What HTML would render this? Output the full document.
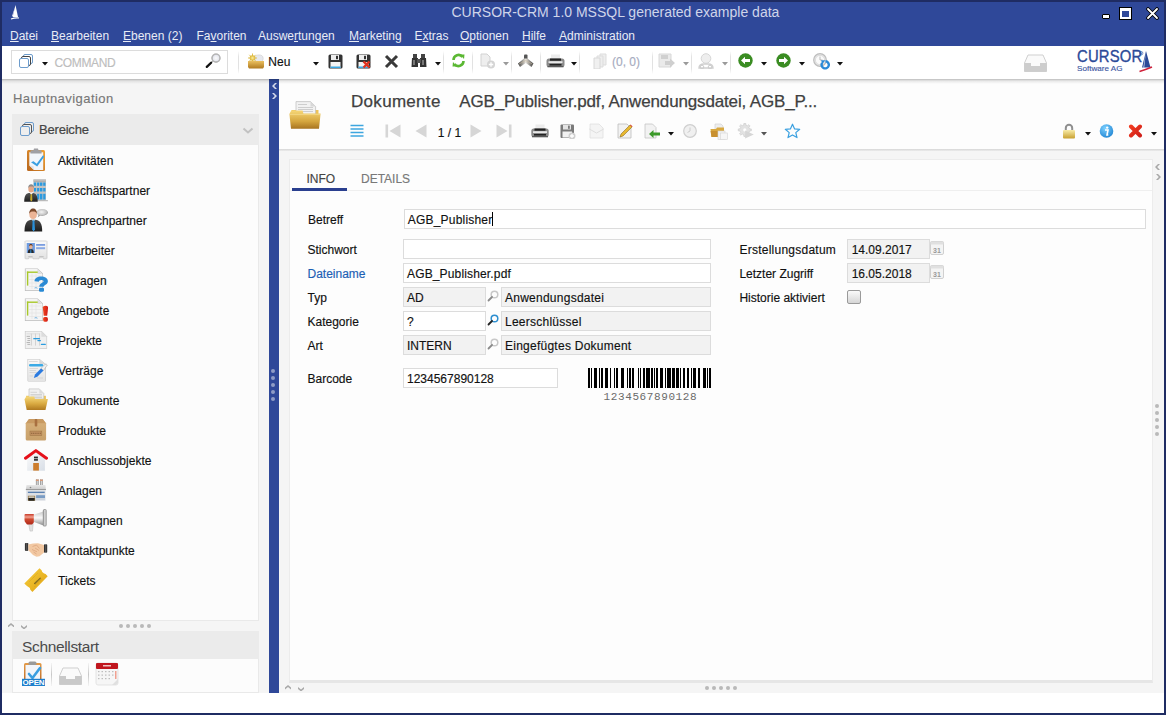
<!DOCTYPE html><html><head><meta charset="utf-8"><style>
*{box-sizing:border-box;margin:0;padding:0}
html,body{width:1166px;height:715px;overflow:hidden;background:#1f2c63;font-family:"Liberation Sans",sans-serif;font-size:12px;color:#111}
.a{position:absolute}
.t{white-space:nowrap;-webkit-text-stroke:0.15px currentColor}
</style></head><body>
<div class="a" style="left:2px;top:2px;width:1162px;height:44px;background:#2f4899"></div>
<svg class="a" style="left:9px;top:4px" width="12" height="18" viewBox="0 0 12 18"><path d="M6.5 1 L9 13 L3.5 13 Z" fill="#fff"/><path d="M6 3 L4 12 L3 12Z" fill="#dde"/><path d="M2 15 Q6 13.5 10 14" stroke="#fff" stroke-width="1.2" fill="none"/></svg>
<div class="a t" style="left:451.5px;top:4.85px;font-size:14px;line-height:14px;color:#cfd5ea;-webkit-text-stroke:0">CURSOR-CRM 1.0 MSSQL generated example data</div>
<div class="a" style="left:1101.5px;top:14px;width:8px;height:5px;background:#fff;border:1px solid #000;border-radius:1px"></div>
<div class="a" style="left:1119px;top:7px;width:13px;height:13px;border:1px solid #000;background:#000"></div>
<div class="a" style="left:1120px;top:8px;width:11px;height:11px;border:2px solid #fff;border-top-width:3px;background:#2f4899"></div>
<svg class="a" style="left:1146px;top:7px" width="13" height="13" viewBox="0 0 13 13"><path d="M2 2L11 11M11 2L2 11" stroke="#000" stroke-width="3.6" stroke-linecap="round"/><path d="M2 2L11 11M11 2L2 11" stroke="#fff" stroke-width="1.8" stroke-linecap="round"/></svg>
<div class="a t" style="left:10px;top:30.04px;font-size:12px;line-height:12px;color:#e9ecf6;-webkit-text-stroke:0"><u>D</u>atei</div>
<div class="a t" style="left:51px;top:30.04px;font-size:12px;line-height:12px;color:#e9ecf6;-webkit-text-stroke:0"><u>B</u>earbeiten</div>
<div class="a t" style="left:123px;top:30.04px;font-size:12px;line-height:12px;color:#e9ecf6;-webkit-text-stroke:0"><u>E</u>benen (2)</div>
<div class="a t" style="left:196.5px;top:30.04px;font-size:12px;line-height:12px;color:#e9ecf6;-webkit-text-stroke:0">Fa<u>v</u>oriten</div>
<div class="a t" style="left:258px;top:30.04px;font-size:12px;line-height:12px;color:#e9ecf6;-webkit-text-stroke:0">Auswe<u>r</u>tungen</div>
<div class="a t" style="left:349px;top:30.04px;font-size:12px;line-height:12px;color:#e9ecf6;-webkit-text-stroke:0"><u>M</u>arketing</div>
<div class="a t" style="left:414.5px;top:30.04px;font-size:12px;line-height:12px;color:#e9ecf6;-webkit-text-stroke:0">E<u>x</u>tras</div>
<div class="a t" style="left:460px;top:30.04px;font-size:12px;line-height:12px;color:#e9ecf6;-webkit-text-stroke:0"><u>O</u>ptionen</div>
<div class="a t" style="left:522px;top:30.04px;font-size:12px;line-height:12px;color:#e9ecf6;-webkit-text-stroke:0"><u>H</u>ilfe</div>
<div class="a t" style="left:559px;top:30.04px;font-size:12px;line-height:12px;color:#e9ecf6;-webkit-text-stroke:0"><u>A</u>dministration</div>
<div class="a" style="left:2px;top:46px;width:1162px;height:33px;background:#fff"></div>
<div class="a" style="left:2px;top:79px;width:267px;height:614px;background:#f5f5f5"></div>
<div class="a" style="left:269px;top:79px;width:10px;height:614px;background:#2f4899"></div>
<div class="a" style="left:279px;top:79px;width:885px;height:614px;background:#f5f5f5"></div>
<div class="a" style="left:279px;top:79px;width:885px;height:70px;background:#fdfdfd"></div>
<div class="a" style="left:279px;top:149px;width:885px;height:2px;background:linear-gradient(#d6d6d6,#ececec)"></div>
<div class="a" style="left:2px;top:693px;width:1162px;height:20px;background:#fff"></div>
<div class="a" style="left:11px;top:50px;width:217px;height:24px;border:1px solid #dcdcdc;background:#fff"></div>
<svg class="a" style="left:18px;top:53px" width="16" height="16" viewBox="0 0 16 16"><rect x="5.5" y="1.5" width="9" height="9" rx="1.5" fill="#fff" stroke="#6d9ccc"/><rect x="3.5" y="3.5" width="9" height="9" rx="1.5" fill="#fff" stroke="#444"/><rect x="1.5" y="5.5" width="9" height="9" rx="1.5" fill="#fff" stroke="#6d9ccc"/></svg>
<svg class="a" style="left:42px;top:61.5px" width="6" height="4" viewBox="0 0 6 4"><path d="M0 0H6L3 3.5Z" fill="#111"/></svg>
<div class="a t" style="left:54.5px;top:56.84px;font-size:12px;line-height:12px;color:#bdbdbd;letter-spacing:-0.35px">COMMAND</div>
<svg class="a" style="left:204px;top:53px" width="18" height="16" viewBox="0 0 18 16"><defs><radialGradient id="mgg" cx=".5" cy=".5" r=".5"><stop offset="0" stop-color="#fafafa"/><stop offset=".7" stop-color="#e4e6ee"/><stop offset="1" stop-color="#b8b8b8"/></radialGradient></defs><path d="M7 9.8L9.2 7.8" stroke="#b0b0b0" stroke-width="1.2"/><path d="M2.8 13.9L7.1 9.7" stroke="#111" stroke-width="2.3" stroke-linecap="round"/><circle cx="12" cy="5.1" r="4.6" fill="url(#mgg)"/><circle cx="12" cy="5.1" r="3.9" fill="none" stroke="#b4b4b4" stroke-width="1.3"/></svg>
<div class="a" style="left:238px;top:51px;width:1px;height:23px;background:linear-gradient(#fff,#e2e2e2 25%,#e2e2e2 75%,#fff)"></div>
<div class="a" style="left:443px;top:51px;width:1px;height:23px;background:linear-gradient(#fff,#e2e2e2 25%,#e2e2e2 75%,#fff)"></div>
<div class="a" style="left:472px;top:51px;width:1px;height:23px;background:linear-gradient(#fff,#e2e2e2 25%,#e2e2e2 75%,#fff)"></div>
<div class="a" style="left:511px;top:51px;width:1px;height:23px;background:linear-gradient(#fff,#e2e2e2 25%,#e2e2e2 75%,#fff)"></div>
<div class="a" style="left:540px;top:51px;width:1px;height:23px;background:linear-gradient(#fff,#e2e2e2 25%,#e2e2e2 75%,#fff)"></div>
<div class="a" style="left:579px;top:51px;width:1px;height:23px;background:linear-gradient(#fff,#e2e2e2 25%,#e2e2e2 75%,#fff)"></div>
<div class="a" style="left:652px;top:51px;width:1px;height:23px;background:linear-gradient(#fff,#e2e2e2 25%,#e2e2e2 75%,#fff)"></div>
<div class="a" style="left:691px;top:51px;width:1px;height:23px;background:linear-gradient(#fff,#e2e2e2 25%,#e2e2e2 75%,#fff)"></div>
<div class="a" style="left:730px;top:51px;width:1px;height:23px;background:linear-gradient(#fff,#e2e2e2 25%,#e2e2e2 75%,#fff)"></div>
<svg class="a" style="left:247px;top:53px" width="18" height="16" viewBox="0 0 18 16"><defs><linearGradient id="gf" x1="0" y1="0" x2="0" y2="1"><stop offset="0" stop-color="#eac060"/><stop offset="1" stop-color="#b07a20"/></linearGradient><radialGradient id="sun" cx=".5" cy=".5" r=".5"><stop offset="0" stop-color="#fff0a0"/><stop offset="1" stop-color="#d8b030"/></radialGradient></defs><ellipse cx="12" cy="5.5" rx="4.2" ry="3.6" fill="#e6e8ee" stroke="#c4c4c4" stroke-width=".5"/><path d="M5.5 0.5V9.5M1 5H10M2.3 1.8L8.7 8.2M8.7 1.8L2.3 8.2" stroke="#e0c050" stroke-width="1"/><circle cx="5.5" cy="5" r="2.8" fill="url(#sun)"/><path d="M1 8H17V14L16 15.5H2L1 14Z" fill="url(#gf)"/></svg>
<div class="a t" style="left:268.3px;top:56.04px;font-size:12px;line-height:12px;color:#111;">Neu</div>
<svg class="a" style="left:313px;top:62px" width="6" height="4" viewBox="0 0 6 4"><path d="M0 0H6L3 3.5Z" fill="#111"/></svg>
<svg class="a" style="left:327.5px;top:53.5px" width="15" height="15" viewBox="0 0 15 15"><rect x=".5" y=".5" width="14" height="14" rx="1.5" fill="#333"/><rect x="3" y="1" width="8" height="5" fill="#eee"/><rect x="8" y="1.8" width="2" height="3.4" fill="#333"/><rect x="2.5" y="8" width="10" height="6" fill="#f4f4f4"/><rect x="2.5" y="12.5" width="10" height="1.5" fill="#3aa7e2"/></svg>
<svg class="a" style="left:355.5px;top:53.5px" width="15" height="15" viewBox="0 0 15 15"><rect x=".5" y=".5" width="14" height="14" rx="1.5" fill="#333"/><rect x="3" y="1" width="8" height="5" fill="#eee"/><rect x="8" y="1.8" width="2" height="3.4" fill="#333"/><rect x="2.5" y="8" width="10" height="6" fill="#f4f4f4"/><rect x="2.5" y="12.5" width="10" height="1.5" fill="#3aa7e2"/></svg>
<svg class="a" style="left:362px;top:60px" width="9" height="9" viewBox="0 0 9 9"><path d="M1.5 1.5L7.5 7.5M7.5 1.5L1.5 7.5" stroke="#e0321e" stroke-width="2.4"/></svg>
<svg class="a" style="left:383.5px;top:53.5px" width="15" height="15" viewBox="0 0 15 15"><path d="M2 2L13 13M13 2L2 13" stroke="#3a3a3a" stroke-width="3"/></svg>
<svg class="a" style="left:411px;top:53px" width="16" height="15" viewBox="0 0 16 15"><rect x="2" y="1" width="4" height="4" fill="#444"/><rect x="10" y="1" width="4" height="4" fill="#444"/><path d="M1 5H7V14H0.5Z" fill="#333"/><path d="M9 5H15L15.5 14H9Z" fill="#333"/><rect x="6" y="6" width="4" height="4" fill="#555"/><rect x="2" y="7" width="2" height="5" fill="#777"/><rect x="11" y="7" width="2" height="5" fill="#777"/></svg>
<svg class="a" style="left:435px;top:62px" width="6" height="4" viewBox="0 0 6 4"><path d="M0 0H6L3 3.5Z" fill="#111"/></svg>
<svg class="a" style="left:450.5px;top:53px" width="15" height="15" viewBox="0 0 15 15"><path d="M2.5 7A5 5 0 0 1 11.5 4" stroke="#5bb833" stroke-width="2.6" fill="none"/><path d="M9 1.5L13.5 1.5L13 6Z" fill="#5bb833"/><path d="M12.5 8A5 5 0 0 1 3.5 11" stroke="#5bb833" stroke-width="2.6" fill="none"/><path d="M6 13.5L1.5 13.5L2 9Z" fill="#5bb833"/></svg>
<svg class="a" style="left:479px;top:53px" width="17" height="16" viewBox="0 0 17 16"><path d="M2 1H8L11 4V13H2Z" fill="#eee" stroke="#d2d2d2"/><circle cx="12" cy="11.5" r="4" fill="#d4d4d4"/><path d="M12 9.3V13.7M9.8 11.5H14.2" stroke="#fff" stroke-width="1.3"/></svg>
<svg class="a" style="left:502.5px;top:62px" width="6" height="4" viewBox="0 0 6 4"><path d="M0 0H6L3 3.5Z" fill="#9a9a9a"/></svg>
<svg class="a" style="left:518px;top:54px" width="16" height="14" viewBox="0 0 16 14"><defs><linearGradient id="mgl" x1="0" y1="0" x2="1" y2="0"><stop offset="0" stop-color="#3a3a3a"/><stop offset=".5" stop-color="#e8e4dc"/><stop offset="1" stop-color="#3a3a3a"/></linearGradient></defs><rect x="6" y="0.5" width="3.5" height="5" rx="1" fill="#555"/><path d="M6 4.5H9.5L15.5 9.5L13.5 13L7.75 9L2 13L0 9.5Z" fill="url(#mgl)"/><path d="M1 10L7.75 6.5L14.5 10" stroke="#c8b8a0" stroke-width=".6" fill="none"/></svg>
<svg class="a" style="left:546px;top:53px" width="19" height="15" viewBox="0 0 19 15"><rect x="5" y="1.5" width="9" height="5" fill="#ececec"/><rect x="0.5" y="5.5" width="18" height="8.5" rx="2.5" fill="#8a8a8a"/><rect x="4" y="5.5" width="11" height="2.2" fill="#222"/><rect x="2.5" y="8.3" width="14" height="1.6" fill="#f2f2f2"/><rect x="3.5" y="11" width="12" height="1.6" fill="#222"/><rect x="1.5" y="13" width="16" height="1.3" fill="#5a5a5a"/></svg>
<svg class="a" style="left:570.5px;top:62px" width="6" height="4" viewBox="0 0 6 4"><path d="M0 0H6L3 3.5Z" fill="#111"/></svg>
<svg class="a" style="left:593px;top:53px" width="15" height="16" viewBox="0 0 15 16"><path d="M7 1H13V12H7Z" fill="#eee" stroke="#ddd"/><path d="M4 3H10V14H4Z" fill="#eee" stroke="#ddd"/><path d="M1 5H7V16H1Z" fill="#f0f0f0" stroke="#d8d8d8"/></svg>
<div class="a t" style="left:612px;top:56.44px;font-size:12px;line-height:12px;color:#a6abc0;">(0, 0)</div>
<svg class="a" style="left:658px;top:53px" width="18" height="16" viewBox="0 0 18 16"><path d="M1 1H13V14H1Z" fill="#eaeaea" stroke="#d8d8d8"/><rect x="3" y="2" width="7" height="4" fill="#d0d0d0"/><path d="M7 8H12V5.5L17 10L12 14.5V12H7Z" fill="#cfcfcf"/></svg>
<svg class="a" style="left:683px;top:62px" width="6" height="4" viewBox="0 0 6 4"><path d="M0 0H6L3 3.5Z" fill="#9a9a9a"/></svg>
<svg class="a" style="left:698px;top:53px" width="16" height="16" viewBox="0 0 16 16"><circle cx="8" cy="5.5" r="4.8" fill="#eee" stroke="#d6d6d6"/><path d="M1 15C1 12 3 11 6 11H10C13 11 15 12 15 15Z" fill="none" stroke="#d0d0d0" stroke-width="1.4"/><circle cx="4" cy="14" r="1.8" fill="none" stroke="#ccc"/><circle cx="12" cy="14" r="1.8" fill="none" stroke="#ccc"/></svg>
<svg class="a" style="left:722px;top:62px" width="6" height="4" viewBox="0 0 6 4"><path d="M0 0H6L3 3.5Z" fill="#9a9a9a"/></svg>
<svg class="a" style="left:737.5px;top:53px" width="15" height="15" viewBox="0 0 15 15"><circle cx="7.5" cy="7.5" r="7.2" fill="#3a8c22"/><path d="M3 7.5L7 3.8V6H12V9H7V11.2Z" fill="#fff"/></svg>
<svg class="a" style="left:761px;top:61.5px" width="6" height="4" viewBox="0 0 6 4"><path d="M0 0H6L3 3.5Z" fill="#111"/></svg>
<svg class="a" style="left:775.5px;top:53px" width="15" height="15" viewBox="0 0 15 15"><circle cx="7.5" cy="7.5" r="7.2" fill="#3a8c22"/><path d="M12 7.5L8 3.8V6H3V9H8V11.2Z" fill="#fff"/></svg>
<svg class="a" style="left:799px;top:61.5px" width="6" height="4" viewBox="0 0 6 4"><path d="M0 0H6L3 3.5Z" fill="#111"/></svg>
<svg class="a" style="left:813px;top:53px" width="17" height="17" viewBox="0 0 17 17"><circle cx="7" cy="7" r="6.3" fill="#e6e6e6" stroke="#bdbdbd" stroke-width="1.2"/><circle cx="7" cy="7" r="4.6" fill="#fafafa" stroke="#d0d0d0" stroke-width=".6"/><path d="M7 3.5V7H9.5" stroke="#aaa" stroke-width=".8" fill="none"/><path d="M9.2 9.8A3.6 3.6 0 1 0 12.5 8.2" stroke="#2a8ad8" stroke-width="2.4" fill="none"/><path d="M8 7.2L12.2 7.2L9.5 11Z" fill="#2a8ad8"/></svg>
<svg class="a" style="left:837px;top:61.5px" width="6" height="4" viewBox="0 0 6 4"><path d="M0 0H6L3 3.5Z" fill="#111"/></svg>
<svg class="a" style="left:1024px;top:54px" width="23" height="18" viewBox="0 0 23 18"><path d="M4 1H19L22.5 9V17.5H0.5V9Z" fill="#fafafa" stroke="#cfcfcf" stroke-width="1"/><path d="M0.5 9H7V12H16V9H22.5V17.5H0.5Z" fill="#cdcdcd"/></svg>
<div class="a t" style="left:1077px;top:47.83px;font-size:16.5px;line-height:16.5px;color:#2b4a98;-webkit-text-stroke:0.35px #2b4a98;transform:scaleX(0.9);transform-origin:left;letter-spacing:0.2px">CURSOR</div>
<div class="a t" style="left:1077px;top:64.94px;font-size:8.1px;line-height:8.1px;color:#3d57a2;">Software AG</div>
<svg class="a" style="left:1138.5px;top:50.5px" width="5" height="5" viewBox="0 0 5 5"><circle cx="2.2" cy="2.2" r="1.7" fill="none" stroke="#2b4a98" stroke-width=".6"/><circle cx="2.2" cy="2.2" r=".5" fill="#2b4a98"/></svg>
<svg class="a" style="left:1138px;top:50px" width="16" height="24" viewBox="0 0 16 24"><path d="M8 1L12.5 17.5H4Z" fill="#2b4a98"/><path d="M8 1.5L6.2 17.5H5.3Z" fill="#fff" opacity=".8"/><path d="M1.5 21.5Q8 19.5 14 17" stroke="#d0213a" stroke-width="1.6" fill="none"/></svg>
<div class="a t" style="left:13px;top:92.20px;font-size:13px;line-height:13px;color:#777;letter-spacing:0.45px;-webkit-text-stroke:0.15px #777">Hauptnavigation</div>
<div class="a" style="left:12px;top:114px;width:247px;height:31px;background:#ebebeb"></div>
<svg class="a" style="left:19px;top:121px" width="16" height="16" viewBox="0 0 16 16"><rect x="5.5" y="1.5" width="9" height="9" rx="1.5" fill="#eee" stroke="#6d9ccc"/><rect x="3.5" y="3.5" width="9" height="9" rx="1.5" fill="#eee" stroke="#555"/><rect x="1.5" y="5.5" width="9" height="9" rx="1.5" fill="#eee" stroke="#6d9ccc"/></svg>
<div class="a t" style="left:39px;top:123.20px;font-size:13px;line-height:13px;color:#444;letter-spacing:-0.2px;-webkit-text-stroke:0.2px #444">Bereiche</div>
<svg class="a" style="left:242px;top:127px" width="12" height="8" viewBox="0 0 12 8"><path d="M1.5 1.5L6 5.5L10.5 1.5" stroke="#c2c2c2" stroke-width="2" fill="none"/></svg>
<div class="a" style="left:12px;top:145px;width:247px;height:476px;background:#fcfcfc;border:1px solid #e9e9e9;border-top:none"></div>
<div class="a t" style="left:58px;top:155.04px;font-size:12px;line-height:12px;color:#111;">Aktivitäten</div>
<div class="a t" style="left:58px;top:185.04px;font-size:12px;line-height:12px;color:#111;">Geschäftspartner</div>
<div class="a t" style="left:58px;top:215.04px;font-size:12px;line-height:12px;color:#111;">Ansprechpartner</div>
<div class="a t" style="left:58px;top:245.04px;font-size:12px;line-height:12px;color:#111;">Mitarbeiter</div>
<div class="a t" style="left:58px;top:275.04px;font-size:12px;line-height:12px;color:#111;">Anfragen</div>
<div class="a t" style="left:58px;top:305.04px;font-size:12px;line-height:12px;color:#111;">Angebote</div>
<div class="a t" style="left:58px;top:335.04px;font-size:12px;line-height:12px;color:#111;">Projekte</div>
<div class="a t" style="left:58px;top:365.04px;font-size:12px;line-height:12px;color:#111;">Verträge</div>
<div class="a t" style="left:58px;top:395.04px;font-size:12px;line-height:12px;color:#111;">Dokumente</div>
<div class="a t" style="left:58px;top:425.04px;font-size:12px;line-height:12px;color:#111;">Produkte</div>
<div class="a t" style="left:58px;top:455.04px;font-size:12px;line-height:12px;color:#111;">Anschlussobjekte</div>
<div class="a t" style="left:58px;top:485.04px;font-size:12px;line-height:12px;color:#111;">Anlagen</div>
<div class="a t" style="left:58px;top:515.04px;font-size:12px;line-height:12px;color:#111;">Kampagnen</div>
<div class="a t" style="left:58px;top:545.04px;font-size:12px;line-height:12px;color:#111;">Kontaktpunkte</div>
<div class="a t" style="left:58px;top:575.04px;font-size:12px;line-height:12px;color:#111;">Tickets</div>
<div class="a" style="left:119px;top:624px;width:4px;height:4px;background:#b9b9b9;border-radius:50%"></div>
<div class="a" style="left:126px;top:624px;width:4px;height:4px;background:#b9b9b9;border-radius:50%"></div>
<div class="a" style="left:133px;top:624px;width:4px;height:4px;background:#b9b9b9;border-radius:50%"></div>
<div class="a" style="left:140px;top:624px;width:4px;height:4px;background:#b9b9b9;border-radius:50%"></div>
<div class="a" style="left:147px;top:624px;width:4px;height:4px;background:#b9b9b9;border-radius:50%"></div>
<svg class="a" style="left:8px;top:622.5px" width="6" height="4.5" viewBox="0 0 6 4.5"><path d="M0 2.5L3 0L6 2.5V4.5L3 2L0 4.5Z" fill="#a9a9a9"/></svg>
<svg class="a" style="left:21px;top:624.5px" width="6" height="4.5" viewBox="0 0 6 4.5"><path d="M0 0L3 2.5L6 0V2L3 4.5L0 2Z" fill="#a9a9a9"/></svg>
<div class="a" style="left:12px;top:631px;width:247px;height:28px;background:#ebebeb"></div>
<div class="a t" style="left:22px;top:638.58px;font-size:15.5px;line-height:15.5px;color:#4a4a4a;letter-spacing:-0.35px;-webkit-text-stroke:0">Schnellstart</div>
<div class="a" style="left:12px;top:659px;width:247px;height:34px;background:#fcfcfc;border:1px solid #e9e9e9;border-top:none"></div>
<svg class="a" style="left:272px;top:83px" width="5" height="6" viewBox="0 0 5 6"><path d="M3 0L0 3L3 6H5L2.2 3L5 0Z" fill="#d4d9ea"/></svg>
<svg class="a" style="left:272px;top:93px" width="5" height="6" viewBox="0 0 5 6"><path d="M2 0L5 3L2 6H0L2.8 3L0 0Z" fill="#d4d9ea"/></svg>
<div class="a" style="left:271px;top:369px;width:4px;height:4px;background:#8f9cc6;border-radius:50%"></div>
<div class="a" style="left:271px;top:376px;width:4px;height:4px;background:#8f9cc6;border-radius:50%"></div>
<div class="a" style="left:271px;top:383px;width:4px;height:4px;background:#8f9cc6;border-radius:50%"></div>
<div class="a" style="left:271px;top:390px;width:4px;height:4px;background:#8f9cc6;border-radius:50%"></div>
<div class="a" style="left:271px;top:397px;width:4px;height:4px;background:#8f9cc6;border-radius:50%"></div>
<div class="a t" style="left:351px;top:93.21px;font-size:17px;line-height:17px;color:#404040;letter-spacing:0.3px;-webkit-text-stroke:0.25px #404040">Dokumente</div>
<div class="a t" style="left:459.3px;top:93.21px;font-size:17px;line-height:17px;color:#404040;letter-spacing:-0.15px;-webkit-text-stroke:0.25px #404040">AGB_Publisher.pdf, Anwendungsdatei, AGB_P...</div>
<div class="a t" style="left:437.8px;top:127.44px;font-size:12px;line-height:12px;color:#111;">1 / 1</div>
<div class="a" style="left:289px;top:159px;width:864px;height:524px;background:#fdfdfd;border:1px solid #ececec;border-bottom:3px solid #e6e6e6"></div>
<div class="a t" style="left:306.5px;top:172.74px;font-size:12px;line-height:12px;color:#444;">INFO</div>
<div class="a t" style="left:361px;top:172.74px;font-size:12px;line-height:12px;color:#787878;">DETAILS</div>
<div class="a" style="left:290px;top:190px;width:862px;height:1px;background:#efefef"></div>
<div class="a" style="left:292px;top:188px;width:55px;height:3px;background:#2a3f8f"></div>
<div class="a" style="left:705px;top:686px;width:4px;height:4px;background:#b9b9b9;border-radius:50%"></div>
<div class="a" style="left:712px;top:686px;width:4px;height:4px;background:#b9b9b9;border-radius:50%"></div>
<div class="a" style="left:719px;top:686px;width:4px;height:4px;background:#b9b9b9;border-radius:50%"></div>
<div class="a" style="left:726px;top:686px;width:4px;height:4px;background:#b9b9b9;border-radius:50%"></div>
<div class="a" style="left:733px;top:686px;width:4px;height:4px;background:#b9b9b9;border-radius:50%"></div>
<svg class="a" style="left:285px;top:685.2px" width="6" height="4.5" viewBox="0 0 6 4.5"><path d="M0 2.5L3 0L6 2.5V4.5L3 2L0 4.5Z" fill="#a9a9a9"/></svg>
<svg class="a" style="left:298px;top:686.5px" width="6" height="4.5" viewBox="0 0 6 4.5"><path d="M0 0L3 2.5L6 0V2L3 4.5L0 2Z" fill="#a9a9a9"/></svg>
<svg class="a" style="left:1155px;top:163.5px" width="5" height="6" viewBox="0 0 5 6"><path d="M3 0L0 3L3 6H5L2.2 3L5 0Z" fill="#a8a8a8"/></svg>
<svg class="a" style="left:1156px;top:174px" width="5" height="6" viewBox="0 0 5 6"><path d="M2 0L5 3L2 6H0L2.8 3L0 0Z" fill="#a8a8a8"/></svg>
<div class="a" style="left:1155px;top:404px;width:4px;height:4px;background:#b9b9b9;border-radius:50%"></div>
<div class="a" style="left:1155px;top:411px;width:4px;height:4px;background:#b9b9b9;border-radius:50%"></div>
<div class="a" style="left:1155px;top:418px;width:4px;height:4px;background:#b9b9b9;border-radius:50%"></div>
<div class="a" style="left:1155px;top:425px;width:4px;height:4px;background:#b9b9b9;border-radius:50%"></div>
<div class="a" style="left:1155px;top:432px;width:4px;height:4px;background:#b9b9b9;border-radius:50%"></div>
<div class="a t" style="left:308px;top:214.44px;font-size:12px;line-height:12px;color:#111;">Betreff</div>
<div class="a" style="left:404px;top:209px;width:742px;height:20px;background:#fff;border:1px solid #dcdcdc"></div>
<div class="a t" style="left:407.8px;top:214.44px;font-size:12px;line-height:12px;color:#111;letter-spacing:0.2px">AGB_Publisher</div>
<div class="a" style="left:492px;top:212px;width:1px;height:14px;background:#000"></div>
<div class="a t" style="left:307.5px;top:244.04px;font-size:12px;line-height:12px;color:#111;">Stichwort</div>
<div class="a t" style="left:307.5px;top:268.04px;font-size:12px;line-height:12px;color:#1c60b4;">Dateiname</div>
<div class="a t" style="left:307.5px;top:292.04px;font-size:12px;line-height:12px;color:#111;">Typ</div>
<div class="a t" style="left:307.5px;top:316.04px;font-size:12px;line-height:12px;color:#111;">Kategorie</div>
<div class="a t" style="left:307.5px;top:340.04px;font-size:12px;line-height:12px;color:#111;">Art</div>
<div class="a" style="left:403px;top:239px;width:308px;height:20px;background:#fff;border:1px solid #dcdcdc"></div>
<div class="a" style="left:403px;top:263px;width:308px;height:20px;background:#fff;border:1px solid #dcdcdc"></div>
<div class="a t" style="left:407px;top:268.04px;font-size:12px;line-height:12px;color:#111;letter-spacing:0.15px">AGB_Publisher.pdf</div>
<div class="a" style="left:403px;top:287px;width:83px;height:20px;background:#f2f2f2;border:1px solid #dcdcdc"></div>
<div class="a t" style="left:407px;top:292.04px;font-size:12px;line-height:12px;color:#111;">AD</div>
<svg class="a" style="left:487px;top:290px" width="12" height="12" viewBox="0 0 12 12"><circle cx="7.5" cy="4.5" r="3.3" fill="none" stroke="#c8c8c8" stroke-width="1.5"/><path d="M1.5 10.5L5 7" stroke="#8a8a8a" stroke-width="1.8" stroke-linecap="round"/></svg>
<div class="a" style="left:501px;top:287px;width:210px;height:20px;background:#f2f2f2;border:1px solid #dcdcdc"></div>
<div class="a t" style="left:505px;top:292.04px;font-size:12px;line-height:12px;color:#111;letter-spacing:0.25px">Anwendungsdatei</div>
<div class="a" style="left:403px;top:311px;width:83px;height:20px;background:#fff;border:1px solid #dcdcdc"></div>
<div class="a t" style="left:407px;top:316.04px;font-size:12px;line-height:12px;color:#111;">?</div>
<svg class="a" style="left:487px;top:314px" width="12" height="12" viewBox="0 0 12 12"><circle cx="7.5" cy="4.5" r="3.3" fill="none" stroke="#2d8fd0" stroke-width="1.5"/><path d="M1.5 10.5L5 7" stroke="#222" stroke-width="1.8" stroke-linecap="round"/></svg>
<div class="a" style="left:501px;top:311px;width:210px;height:20px;background:#f2f2f2;border:1px solid #dcdcdc"></div>
<div class="a t" style="left:505px;top:316.04px;font-size:12px;line-height:12px;color:#111;letter-spacing:0.25px">Leerschlüssel</div>
<div class="a" style="left:403px;top:335px;width:83px;height:20px;background:#f2f2f2;border:1px solid #dcdcdc"></div>
<div class="a t" style="left:407px;top:340.04px;font-size:12px;line-height:12px;color:#111;">INTERN</div>
<svg class="a" style="left:487px;top:338px" width="12" height="12" viewBox="0 0 12 12"><circle cx="7.5" cy="4.5" r="3.3" fill="none" stroke="#c8c8c8" stroke-width="1.5"/><path d="M1.5 10.5L5 7" stroke="#8a8a8a" stroke-width="1.8" stroke-linecap="round"/></svg>
<div class="a" style="left:501px;top:335px;width:210px;height:20px;background:#f2f2f2;border:1px solid #dcdcdc"></div>
<div class="a t" style="left:505px;top:340.04px;font-size:12px;line-height:12px;color:#111;letter-spacing:0.25px">Eingefügtes Dokument</div>
<div class="a t" style="left:307.5px;top:373.04px;font-size:12px;line-height:12px;color:#111;">Barcode</div>
<div class="a" style="left:403px;top:368px;width:155px;height:20px;background:#fff;border:1px solid #dcdcdc"></div>
<div class="a t" style="left:407px;top:373.04px;font-size:12px;line-height:12px;color:#111;">1234567890128</div>
<div class="a t" style="left:603.6px;top:391.69px;font-size:11px;line-height:11px;color:#6a6a6a;font-family:'Liberation Mono',monospace;letter-spacing:0.6px;-webkit-text-stroke:0">1234567890128</div>
<div class="a t" style="left:739.4px;top:244.04px;font-size:12px;line-height:12px;color:#111;letter-spacing:0.25px">Erstellungsdatum</div>
<div class="a" style="left:847px;top:239px;width:83px;height:20px;background:#f2f2f2;border:1px solid #dcdcdc"></div>
<div class="a t" style="left:851.7px;top:244.04px;font-size:12px;line-height:12px;color:#111;">14.09.2017</div>
<div class="a t" style="left:739.4px;top:268.04px;font-size:12px;line-height:12px;color:#111;">Letzter Zugriff</div>
<div class="a" style="left:847px;top:263px;width:83px;height:20px;background:#f2f2f2;border:1px solid #dcdcdc"></div>
<div class="a t" style="left:851.7px;top:268.04px;font-size:12px;line-height:12px;color:#111;">16.05.2018</div>
<div class="a t" style="left:739.4px;top:292.04px;font-size:12px;line-height:12px;color:#111;">Historie aktiviert</div>
<div class="a" style="left:847px;top:290px;width:14px;height:14px;background:linear-gradient(#fafafa,#d6d6d6);border:1px solid #9a9a9a;border-radius:2px"></div>
<svg class="a" style="left:930px;top:241px" width="14" height="14" viewBox="0 0 14 14"><rect x=".5" y=".5" width="13" height="13" rx="1.5" fill="#f4f4f4" stroke="#d0d0d0"/><rect x=".5" y=".5" width="13" height="3" fill="#e0e0e0"/><text x="7" y="11.5" font-size="7" text-anchor="middle" fill="#999" font-family="Liberation Sans" font-weight="bold">31</text></svg>
<svg class="a" style="left:930px;top:265px" width="14" height="14" viewBox="0 0 14 14"><rect x=".5" y=".5" width="13" height="13" rx="1.5" fill="#f4f4f4" stroke="#d0d0d0"/><rect x=".5" y=".5" width="13" height="3" fill="#e0e0e0"/><text x="7" y="11.5" font-size="7" text-anchor="middle" fill="#999" font-family="Liberation Sans" font-weight="bold">31</text></svg>
<svg class="a" style="left:24px;top:148px" width="24" height="24" viewBox="0 0 24 24"><defs><linearGradient id="cb" x1="1" y1="0" x2="0" y2="1"><stop offset="0" stop-color="#f2a232"/><stop offset="1" stop-color="#b8661e"/></linearGradient></defs>
<rect x="3" y="2" width="18" height="21" rx="1.5" fill="url(#cb)"/>
<path d="M5.3 4.3H19.2V21.9H10L5.3 17.5Z" fill="#f3f6fa"/><path d="M5.3 17.5L10 21.9L9.5 18Z" fill="#dfe4ea"/>
<path d="M10 0.6H14L14.5 2.2H17.5L17.6 5.5H6.4L6.5 2.2H9.5Z" fill="#a0a0a4"/>
<path d="M7 14.3L9.5 13.2L12.7 15.8L19.2 6.9L20 8.9L13.2 18.4Z" fill="#3aa0e2"/></svg>
<svg class="a" style="left:24px;top:178px" width="24" height="24" viewBox="0 0 24 24"><defs><linearGradient id="bg2" x1="0" y1="0" x2="0" y2="1"><stop offset="0" stop-color="#d0d0d0"/><stop offset="1" stop-color="#a8a8a8"/></linearGradient><linearGradient id="su" x1="0" y1="0" x2="0" y2="1"><stop offset="0" stop-color="#555"/><stop offset="1" stop-color="#1e1e1e"/></linearGradient></defs>
<rect x="9.4" y="1" width="12.6" height="21.5" rx="1" fill="#c4c4c4"/><rect x="9.4" y="1" width="12.6" height="3" rx="1" fill="url(#bg2)"/>
<g fill="#2a9ae0"><rect x="9.8" y="4.5" width="2.3" height="3.3"/><rect x="13.1" y="4.5" width="2.2" height="3.3"/><rect x="16" y="4.5" width="2.4" height="3.3"/><rect x="19.2" y="4.5" width="2.3" height="3.3"/>
<rect x="9.8" y="10" width="2.3" height="3.5"/><rect x="13.1" y="10" width="2.2" height="3.5"/><rect x="16" y="10" width="2.4" height="3.5"/><rect x="19.2" y="10" width="2.3" height="3.5"/>
<rect x="13.1" y="15.8" width="2.2" height="5.7"/><rect x="16" y="15.8" width="2.4" height="5.7"/><rect x="19.2" y="15.8" width="2.3" height="5.7"/></g>
<rect x="9.4" y="22.2" width="14.5" height="1" fill="#b0b0b0"/>
<path d="M0.2 23.7C0.2 17.5 2 15 6 15H8C12 15 13.7 17.5 13.7 23.7Z" fill="url(#su)"/>
<path d="M5.8 15H8.8L7.3 17Z" fill="#f4f4f4"/><path d="M6.6 16.2H8L8.4 22L7.3 23.5L6.2 22Z" fill="#c8aa28"/>
<ellipse cx="7.1" cy="11" rx="2.8" ry="3.6" fill="#e4a888"/><path d="M4.2 10.5C4 7.5 5.5 6.2 7.1 6.2C8.8 6.2 10.2 7.5 10 10.5C9.5 8.8 8.5 8.5 7.1 8.5C5.7 8.5 4.7 8.8 4.2 10.5Z" fill="#8c8c8c"/></svg>
<svg class="a" style="left:24px;top:208px" width="24" height="24" viewBox="0 0 24 24"><defs><radialGradient id="bub" cx=".45" cy=".45" r=".6"><stop offset="0" stop-color="#f4f4f4"/><stop offset=".7" stop-color="#c4c4c4"/><stop offset="1" stop-color="#8a8a8a"/></radialGradient><linearGradient id="su3" x1="0" y1="0" x2="0" y2="1"><stop offset="0" stop-color="#4a4a4a"/><stop offset="1" stop-color="#1e1e1e"/></linearGradient></defs>
<ellipse cx="18.1" cy="4.4" rx="5.8" ry="3.5" fill="url(#bub)"/><path d="M14.5 6.5L13.7 9.4L16.5 7.3Z" fill="#9a9a9a"/>
<path d="M0.5 23.5C0.5 15 3 11.5 9.4 11.5C15.8 11.5 18.2 15 18.2 23.5Z" fill="url(#su3)"/>
<path d="M7.5 11.5H11.5L9.5 13.5Z" fill="#f4f4f4"/><path d="M8.6 12.3H10.4L11 21.5L9.6 23.5L8.2 21.5Z" fill="#2a8fd8"/>
<ellipse cx="9.1" cy="6.6" rx="3.8" ry="4.4" fill="#ebb496"/><path d="M5.3 6C5 2.2 7 0.4 9.1 0.4C11.3 0.4 13.2 2.2 12.9 6C12.4 3.8 11 3.4 9.1 3.4C7.2 3.4 5.8 3.8 5.3 6Z" fill="#7c4a2c"/></svg>
<svg class="a" style="left:24px;top:238px" width="24" height="24" viewBox="0 0 24 24"><defs><linearGradient id="cd" x1="0" y1="0" x2="0" y2="1"><stop offset="0" stop-color="#fafafa"/><stop offset="1" stop-color="#e2e2e2"/></linearGradient></defs>
<path d="M1.5 3H22.5L23 3.5V20.3L22.5 20.8H19.5V19.8H15V20.8H9V19.8H4.5V20.8H1.5L1 20.3V3.5Z" fill="url(#cd)" stroke="#c6c6c6" stroke-width=".7"/>
<rect x="2.7" y="5" width="8.2" height="10" fill="#6d9be0"/><path d="M3.8 14.9C3.8 12 5 11 6.8 11C8.6 11 9.8 12 9.8 14.9Z" fill="#2a2a2a"/><path d="M6.4 11.2H7.2L7.4 14.9H6.2Z" fill="#2a8fd8"/>
<ellipse cx="6.8" cy="8.8" rx="1.8" ry="2.3" fill="#e6b090"/><path d="M5 8.5C5 6.5 6 6 6.8 6C7.8 6 8.6 6.5 8.6 8.5C8.2 7.5 7.5 7.2 6.8 7.2C6.1 7.2 5.4 7.5 5 8.5Z" fill="#6a3a20"/>
<rect x="12.1" y="6" width="9" height="1.8" fill="#7b9de0"/><rect x="12.1" y="9.2" width="9" height="2" fill="#8aaae4"/>
<path d="M4.3 18.5H8.6M15.3 18.5H19.6" stroke="#c4c4c4" stroke-width="1"/></svg>
<svg class="a" style="left:24px;top:268px" width="24" height="24" viewBox="0 0 24 24"><path d="M0.9 0.4H13.7L19 5.6V23.1H0.9Z" fill="#bdbdbd"/><path d="M1.6 1H13.4L18.4 6V22.3H1.6Z" fill="#f4f4f4"/><path d="M13.4 1V6H18.4Z" fill="#e0e0e0"/>
<rect x="2.9" y="3.6" width="1.4" height="14" fill="#a8c828"/><rect x="2.9" y="3.5" width="10.8" height="1.4" fill="#a8c828"/>
<path d="M5 8H17.5M5 11.5H17.5M5 15H17.5M5 18.5H17.5M8 5.5V21M12 5.5V21" stroke="#e0e0e0" stroke-width=".6"/><path d="M10.5 20Q12 19 13.5 20.3" stroke="#4aa0e0" stroke-width=".7" fill="none"/><path d="M10.5 13.2C10.5 10 13.5 8.4 17 8.4C21 8.4 23.9 10.3 23.9 13.3C23.9 16.6 20.2 17 19.6 18.8H15.3C15.3 15.2 19.5 14.8 19.5 13.3C19.5 12.5 18.6 11.9 17.3 11.9C15.9 11.9 15 12.6 14.8 13.8Z" fill="#2a8ad4"/><rect x="15" y="19.8" width="5" height="3.9" rx="1.2" fill="#2a8ad4"/></svg>
<svg class="a" style="left:24px;top:298px" width="24" height="24" viewBox="0 0 24 24"><path d="M0.9 0.4H13.7L19 5.6V23.1H0.9Z" fill="#bdbdbd"/><path d="M1.6 1H13.4L18.4 6V22.3H1.6Z" fill="#f4f4f4"/><path d="M13.4 1V6H18.4Z" fill="#e0e0e0"/>
<rect x="2.9" y="3.6" width="1.4" height="14" fill="#a8c828"/><rect x="2.9" y="3.5" width="10.8" height="1.4" fill="#a8c828"/>
<path d="M5 8H17.5M5 11.5H17.5M5 15H17.5M5 18.5H17.5M8 5.5V21M12 5.5V21" stroke="#e0e0e0" stroke-width=".6"/><path d="M10.5 20Q12 19 13.5 20.3" stroke="#4aa0e0" stroke-width=".7" fill="none"/><defs><linearGradient id="ex" x1="0" y1="0" x2="1" y2="0"><stop offset="0" stop-color="#f04a20"/><stop offset="1" stop-color="#d01818"/></linearGradient></defs><path d="M18.8 9.5Q18.8 7.8 21.4 7.8Q24.1 7.8 24.1 9.5L23.2 17.8H19.7Z" fill="url(#ex)"/><rect x="19.1" y="19.1" width="4.8" height="4.6" rx="1.6" fill="url(#ex)"/></svg>
<svg class="a" style="left:24px;top:328px" width="24" height="24" viewBox="0 0 24 24"><path d="M0.9 2.9H17.6L23.1 8.4V20.7H0.9Z" fill="#c8c8c8"/><path d="M1.5 3.5H17.3L22.5 8.7V20.1H1.5Z" fill="#f0f0f0"/><path d="M17.3 3.5V8.7H22.5Z" fill="#dcdcdc"/>
<path d="M7.4 5.5V17.6M11.5 5.5V17.6M15.6 5.5V17.6" stroke="#c4c4c4" stroke-width=".7"/><path d="M2.5 5.8H16" stroke="#d4d4d4" stroke-width=".6"/>
<path d="M2.6 8.4H6M3.4 10.5H6.2M3.4 12.5H6.2M2.6 14.5H6M3.4 16.4H6.2" stroke="#a8a8a8" stroke-width=".8"/>
<rect x="9.2" y="10" width="6.8" height="1.3" rx=".6" fill="#2a9ce0"/><rect x="13.3" y="12" width="3.7" height="1.2" rx=".6" fill="#2a9ce0"/><rect x="16.8" y="15.8" width="5.1" height="1.3" rx=".6" fill="#2a9ce0"/></svg>
<svg class="a" style="left:24px;top:358px" width="24" height="24" viewBox="0 0 24 24"><defs><linearGradient id="vd" x1="0" y1="0" x2="0" y2="1"><stop offset="0" stop-color="#f8f8f8"/><stop offset="1" stop-color="#e4e4e4"/></linearGradient></defs>
<path d="M3.5 0.9H15.6L21.9 6.2V22.5Q21.9 23.5 20.9 23.5H4.5Q3.5 23.5 3.5 22.5Z" fill="#c4c4c4"/><path d="M4.1 1.5H15.3L21.3 6.5V22.9H4.1Z" fill="url(#vd)"/><path d="M15.3 1.5V6.2H21.3Z" fill="#d8d8d8"/>
<rect x="5" y="6" width="14.2" height="2.4" rx="1.2" fill="#3aaae6"/><path d="M5 3.5H13.7M5.5 10.5H14M5.5 12.5H12M5.5 14.5H13M5.5 18H9M13 20H19" stroke="#cfcfcf" stroke-width=".7"/>
<path d="M9.8 20L11 16.4L17.2 10.2L19.5 12.5L13.3 18.7Z" fill="#2a7ae0"/><path d="M17.2 10.2L21.2 6.2Q22.5 5.8 23.3 7L19.5 12.5Z" fill="#f2f2f2" stroke="#9a9a9a" stroke-width=".5"/></svg>
<svg class="a" style="left:24px;top:388px" width="24" height="24" viewBox="0 0 24 24"><defs><linearGradient id="fo" x1="0" y1="0" x2="0" y2="1"><stop offset="0" stop-color="#f6d878"/><stop offset=".55" stop-color="#d8a840"/><stop offset="1" stop-color="#b07a20"/></linearGradient></defs>
<path d="M2.1 7.8H21.9V14H2.1Z" fill="#eec458"/>
<path d="M5 0.9H15.3L19.8 5.5V11H5Z" fill="#f0f0f0" stroke="#b8b8b8" stroke-width=".6"/><path d="M15.3 0.9V5.5H19.8" fill="#dcdcdc"/>
<path d="M6.5 4.3H13M6.5 6.5H18M6.5 8H18M6.5 9.5H18" stroke="#c0c0c0" stroke-width=".6"/>
<path d="M0.5 11.3L2.3 8.6H10.3L10.9 10.9H23.9L21.5 21.9H2.7Z" fill="url(#fo)"/></svg>
<svg class="a" style="left:24px;top:418px" width="24" height="24" viewBox="0 0 24 24"><defs><linearGradient id="bx" x1="0" y1="0" x2="0" y2="1"><stop offset="0" stop-color="#d8b27c"/><stop offset="1" stop-color="#c8a06a"/></linearGradient></defs>
<path d="M5 0.9H18.8L22.1 5.5V21Q22.1 22.5 20.6 22.5H3.2Q1.7 22.5 1.7 21V5.5Z" fill="url(#bx)"/><path d="M1.7 5.5H22.1V6H1.7Z" fill="#e2c290"/><path d="M5 0.9H18.8L22.1 5.5H1.7Z" fill="#c89a62"/>
<rect x="10.7" y="0.9" width="2.6" height="7.7" rx="1" fill="#a87040"/>
<rect x="6" y="13.1" width="11.8" height="4.5" fill="#c09060" stroke="#a07848" stroke-width=".6"/><path d="M7 15.3H17" stroke="#8a6038" stroke-width=".9" stroke-dasharray="1.2 .6"/></svg>
<svg class="a" style="left:24px;top:448px" width="24" height="24" viewBox="0 0 24 24"><defs><linearGradient id="hs" x1="0" y1="0" x2="1" y2="1"><stop offset="0" stop-color="#fcfcfc"/><stop offset="1" stop-color="#d8dee6"/></linearGradient></defs>
<path d="M3.1 10L11.9 3.5L20.9 10V22.7H3.1Z" fill="url(#hs)"/><path d="M1.5 10.2L11.9 2.6L22.5 10.2" stroke="#e6101a" stroke-width="3" fill="none" stroke-linecap="round" stroke-linejoin="round"/>
<rect x="10" y="8.6" width="3.9" height="4.1" fill="#2a2a2a"/><path d="M10 10.6H13.9" stroke="#e8e8e8" stroke-width=".7"/><rect x="9.2" y="15" width="5.7" height="7.6" fill="#cc7c2c"/></svg>
<svg class="a" style="left:24px;top:478px" width="24" height="24" viewBox="0 0 24 24"><defs><linearGradient id="ch" x1="0" y1="0" x2="1" y2="0"><stop offset="0" stop-color="#888"/><stop offset=".5" stop-color="#d8d8d8"/><stop offset="1" stop-color="#888"/></linearGradient><linearGradient id="fb" x1="0" y1="0" x2="0" y2="1"><stop offset="0" stop-color="#e8e8e8"/><stop offset="1" stop-color="#c8c8c8"/></linearGradient></defs>
<rect x="11.9" y="1" width="2.8" height="8.6" rx="1" fill="url(#ch)"/><rect x="16" y="1" width="2.8" height="8.6" rx="1" fill="url(#ch)"/><rect x="11.9" y="1.5" width="2.8" height="1.5" fill="#d89a78"/><rect x="16" y="1.5" width="2.8" height="1.5" fill="#d89a78"/>
<path d="M2.5 7H21.4L21.9 11V12.1H1.9V11Z" fill="url(#fb)"/><rect x="1.9" y="11" width="20" height="1.2" fill="#9a9a9a"/><circle cx="6.5" cy="9.5" r=".8" fill="#888"/>
<rect x="2.3" y="12.1" width="19.2" height="10.6" fill="#dcdfe4"/><rect x="3.9" y="13.7" width="16.8" height="1.3" fill="#5a80b0"/>
<rect x="12.1" y="17.2" width="8.9" height="2.8" fill="#7a9cc4"/><path d="M12.1 21H21" stroke="#b8c4d4" stroke-width=".8"/>
<rect x="3.9" y="17.8" width="7.2" height="4.9" fill="#8a6a30"/><rect x="4.5" y="18.4" width="6" height="1.4" fill="#d8d8d8"/><rect x="4.5" y="20" width="6" height="2.7" fill="#222"/></svg>
<svg class="a" style="left:24px;top:508px" width="24" height="24" viewBox="0 0 24 24"><defs><linearGradient id="mg" x1="0" y1="0" x2="0" y2="1"><stop offset="0" stop-color="#c8c8c8"/><stop offset=".45" stop-color="#fafafa"/><stop offset="1" stop-color="#8a8a8a"/></linearGradient><linearGradient id="mr" x1="0" y1="0" x2="0" y2="1"><stop offset="0" stop-color="#c83a28"/><stop offset=".3" stop-color="#f0a090"/><stop offset=".5" stop-color="#d04a30"/><stop offset="1" stop-color="#b02a1a"/></linearGradient></defs>
<path d="M9.5 6.8L19.4 3.5V17.6L9.5 13.7Z" fill="url(#mg)"/><rect x="18.8" y="0.9" width="3.9" height="17.7" rx="1.9" fill="#9a9a9a"/><rect x="20.3" y="2" width="1.2" height="15.5" fill="#e4e4e4"/>
<path d="M4.5 15L9.2 15.3L8.5 23.1H6Z" fill="#e0e0e0" stroke="#b8b8b8" stroke-width=".5"/>
<path d="M0.5 7Q0.5 6 1.5 6H9.8V14.5L8 16.4H3L1.5 14.5Q0.5 13.5 0.5 12Z" fill="url(#mr)"/></svg>
<svg class="a" style="left:24px;top:538px" width="24" height="24" viewBox="0 0 24 24"><defs><linearGradient id="cf" x1="0" y1="0" x2="1" y2="0"><stop offset="0" stop-color="#222"/><stop offset=".5" stop-color="#555"/><stop offset="1" stop-color="#222"/></linearGradient></defs>
<rect x="0.9" y="5" width="3.4" height="7.9" rx=".8" fill="url(#cf)"/><rect x="20" y="6.2" width="3.2" height="8.5" rx=".8" fill="url(#cf)"/>
<path d="M4.2 6.5L9 5.6L14 5.3L20 7V14.5L15.5 18.2L12.5 18.8L9 17L4.6 12.5Z" fill="#f2c8a2"/>
<path d="M8.5 8.5L12.5 7L15.5 10.5M8 11.5L13 13.8M9.5 14L12.5 16M11 10L15 12.5" stroke="#d8a07a" stroke-width=".7" fill="none"/></svg>
<svg class="a" style="left:24px;top:568px" width="24" height="24" viewBox="0 0 24 24"><defs><linearGradient id="tk" x1="0" y1="0" x2="1" y2="1"><stop offset="0" stop-color="#f6d040"/><stop offset="1" stop-color="#e0a010"/></linearGradient></defs>
<path d="M15.5 0.2L17.6 2.3Q17.8 4.5 19.8 5.2Q21 5.6 21.6 6.1L23.7 8.2L8.4 23.9L6.3 21.8Q6.3 19.8 4.5 19Q3.2 18.5 2.4 17.6L0.3 15.5Z" fill="url(#tk)"/>
<path d="M5.5 13.5L14 5M10.5 18.8L19 10.3" stroke="#c89010" stroke-width=".5" stroke-dasharray="1 .7"/>
<path d="M10.5 15.8L16.8 9.8" stroke="#6a5a20" stroke-width="1.6" stroke-dasharray="1 .4"/></svg>
<svg class="a" style="left:289px;top:101px" width="32" height="28" viewBox="0 0 32 28"><defs><linearGradient id="bf" x1="0" y1="0" x2="0" y2="1"><stop offset="0" stop-color="#f6d676"/><stop offset=".6" stop-color="#d4a53e"/><stop offset="1" stop-color="#a87420"/></linearGradient></defs>
<path d="M2.5 9H29.5V16H2.5Z" fill="#eec458"/>
<path d="M7 0.6H21.5L26.6 5.5V15H7Z" fill="#f2f2f2" stroke="#bcbcbc" stroke-width=".7"/><path d="M21.5 0.6V5.5H26.6Z" fill="#d8d8d8"/>
<path d="M9 3.5H18M9 6.5H24M9 8.5H24M9 10.5H24" stroke="#c4c4c4" stroke-width=".8"/>
<path d="M0.4 13L2.2 9.6H13.6L14.4 12.6H31.6L30 27.7H2Z" fill="url(#bf)"/><path d="M1 13.4H31" stroke="#f8e090" stroke-width=".7"/></svg>
<svg class="a" style="left:350px;top:124px" width="14" height="14" viewBox="0 0 14 14"><path d="M0.5 1.5H13.5M0.5 5H13.5M0.5 8.5H13.5M0.5 12H13.5" stroke="#3ea6df" stroke-width="1.6"/></svg>
<svg class="a" style="left:385px;top:124px" width="16" height="14" viewBox="0 0 16 14"><rect x="0.5" y="0.5" width="2.6" height="13" fill="#d6d6d6"/><path d="M15.5 0.5V13.5L4.5 7Z" fill="#d6d6d6"/></svg>
<svg class="a" style="left:415px;top:124px" width="12" height="14" viewBox="0 0 12 14"><path d="M11.5 0.5V13.5L0.5 7Z" fill="#d6d6d6"/></svg>
<svg class="a" style="left:470px;top:124px" width="12" height="14" viewBox="0 0 12 14"><path d="M0.5 0.5V13.5L11.5 7Z" fill="#d6d6d6"/></svg>
<svg class="a" style="left:496px;top:124px" width="16" height="14" viewBox="0 0 16 14"><rect x="12.9" y="0.5" width="2.6" height="13" fill="#d6d6d6"/><path d="M0.5 0.5V13.5L11.5 7Z" fill="#d6d6d6"/></svg>
<svg class="a" style="left:531px;top:124px" width="18" height="14" viewBox="0 0 18 14"><rect x="4.5" y="0.5" width="9" height="5" fill="#ececec"/><rect x="0.3" y="4.5" width="17.4" height="8.5" rx="2.5" fill="#8a8a8a"/><rect x="3.5" y="4.5" width="11" height="2.2" fill="#222"/><rect x="2" y="7.3" width="14" height="1.6" fill="#f2f2f2"/><rect x="3" y="10" width="12" height="1.6" fill="#222"/><rect x="1" y="12" width="16" height="1.3" fill="#5a5a5a"/></svg>
<svg class="a" style="left:560px;top:124px" width="16" height="15" viewBox="0 0 16 15"><rect x=".5" y=".5" width="13.5" height="13.5" rx="1" fill="#7a7a7a"/><rect x="3" y="1" width="8" height="4.5" fill="#e4e4e4"/><rect x="8" y="1.6" width="1.8" height="3.2" fill="#7a7a7a"/><rect x="2.5" y="7.5" width="9.5" height="6" fill="#f2f2f2"/><circle cx="12" cy="12" r="3.5" fill="#cfcfcf"/><path d="M12 10V14M10 12H14" stroke="#fff" stroke-width="1.3"/></svg>
<svg class="a" style="left:589px;top:123px" width="15" height="16" viewBox="0 0 15 16"><path d="M1 1H10L14 5V15H1Z" fill="#f4f4f4" stroke="#e0e0e0" stroke-width=".8"/><path d="M0.3 6L7.5 10L14.7 6" stroke="#dedede" stroke-width="1" fill="none"/></svg>
<svg class="a" style="left:617px;top:123px" width="16" height="16" viewBox="0 0 16 16"><path d="M1 1H10L14 5V15H1Z" fill="#f2f2f2" stroke="#bdbdbd" stroke-width=".8"/><path d="M3 14L4 11L13 2L15 4L6 13Z" fill="#e8b830" stroke="#7a5a10" stroke-width=".5"/><path d="M13 2L15 4L15.6 3.4L13.6 1.4Z" fill="#e03a30"/></svg>
<svg class="a" style="left:644px;top:123px" width="17" height="16" viewBox="0 0 17 16"><path d="M1 1H8.5L12 4.5V15H1Z" fill="#f2f2f2" stroke="#c4c4c4" stroke-width=".8"/><path d="M5 11L9.5 7V9.5H16V12.5H9.5V15Z" fill="#3c9a2a"/></svg>
<svg class="a" style="left:667.5px;top:132px" width="6" height="4" viewBox="0 0 6 4"><path d="M0 0H6L3 3.5Z" fill="#111"/></svg>
<svg class="a" style="left:683px;top:124px" width="14" height="14" viewBox="0 0 14 14"><circle cx="7" cy="7" r="6.3" fill="#f0f0f0" stroke="#cfcfcf" stroke-width="1.2"/><path d="M7 3.5V7L4.5 8.5" stroke="#c8c8c8" stroke-width=".9" fill="none"/></svg>
<svg class="a" style="left:709.5px;top:123px" width="18" height="17" viewBox="0 0 18 17"><path d="M5 1H11L13 3V8H5Z" fill="#eee" stroke="#ccc" stroke-width=".6"/><path d="M0.5 6H6L7 4.5H14V14H1.5Z" fill="#d8a840"/><path d="M0.5 8H15L14 14H1.5Z" fill="#c89030"/><rect x="8" y="8" width="7" height="8.5" fill="#f2f2f2" stroke="#d4d4d4" stroke-width=".6"/><rect x="10.5" y="10" width="7" height="6.5" fill="#f6f6f6" stroke="#d4d4d4" stroke-width=".6"/></svg>
<svg class="a" style="left:737px;top:123px" width="18" height="17" viewBox="0 0 18 17"><path d="M12.58 5.83 L14.34 5.98 L14.34 7.82 L12.58 7.97 L11.94 9.53 L13.07 10.87 L11.77 12.17 L10.43 11.04 L8.87 11.68 L8.72 13.44 L6.88 13.44 L6.73 11.68 L5.17 11.04 L3.83 12.17 L2.53 10.87 L3.66 9.53 L3.02 7.97 L1.26 7.82 L1.26 5.98 L3.02 5.83 L3.66 4.27 L2.53 2.93 L3.83 1.63 L5.17 2.76 L6.73 2.12 L6.88 0.36 L8.72 0.36 L8.87 2.12 L10.43 2.76 L11.77 1.63 L13.07 2.93 L11.94 4.27Z" fill="#e2e2e2" stroke="#cacaca" stroke-width=".6"/><circle cx="7.8" cy="6.9" r="1.6" fill="#fff"/><path d="M8.1 7.5V15.5L16.8 11.4Z" fill="#d6d6d6"/></svg>
<svg class="a" style="left:761px;top:132px" width="6" height="4" viewBox="0 0 6 4"><path d="M0 0H6L3 3.5Z" fill="#555"/></svg>
<svg class="a" style="left:783.5px;top:123px" width="17" height="16" viewBox="0 0 17 16"><path d="M8.5 1.2L10.6 5.9L15.7 6.3L11.8 9.6L13 14.6L8.5 11.9L4 14.6L5.2 9.6L1.3 6.3L6.4 5.9Z" fill="none" stroke="#3aa0e0" stroke-width="1.2" stroke-linejoin="round"/></svg>
<svg class="a" style="left:1062px;top:123px" width="14" height="16" viewBox="0 0 14 16"><defs><linearGradient id="lk" x1="0" y1="0" x2="0" y2="1"><stop offset="0" stop-color="#f8eca8"/><stop offset="1" stop-color="#c8a030"/></linearGradient></defs><path d="M3.8 7.5V5A3.2 3.2 0 0 1 10.2 5V7.5" stroke="#8f8f8f" stroke-width="2" fill="none"/><rect x="1" y="7" width="12" height="8.5" rx="1" fill="url(#lk)"/></svg>
<svg class="a" style="left:1084.5px;top:132px" width="6" height="4" viewBox="0 0 6 4"><path d="M0 0H6L3 3.5Z" fill="#111"/></svg>
<svg class="a" style="left:1099px;top:124px" width="15" height="14" viewBox="0 0 15 14"><defs><radialGradient id="inf" cx=".4" cy=".3" r=".8"><stop offset="0" stop-color="#7cd0ff"/><stop offset="1" stop-color="#1a80d0"/></radialGradient></defs><circle cx="7.5" cy="7" r="6.8" fill="url(#inf)"/><circle cx="8.2" cy="3.6" r="1.2" fill="#fff"/><path d="M6 6H9L8 11H9.3" stroke="#fff" stroke-width="1.6" fill="none"/></svg>
<svg class="a" style="left:1128px;top:124px" width="15" height="14" viewBox="0 0 15 14"><defs><linearGradient id="rx" x1="0" y1="0" x2="1" y2="1"><stop offset="0" stop-color="#f03a20"/><stop offset="1" stop-color="#d0201a"/></linearGradient></defs><path d="M3 2.5L12 11.5M12 2.5L3 11.5" stroke="url(#rx)" stroke-width="4" stroke-linecap="round"/></svg>
<svg class="a" style="left:1150.5px;top:132px" width="6" height="4" viewBox="0 0 6 4"><path d="M0 0H6L3 3.5Z" fill="#111"/></svg>
<svg class="a" style="left:588px;top:368px" width="123" height="20" viewBox="0 0 123 20"><rect x="0" y="0" width="2" height="20" fill="#000"/><rect x="3" y="0" width="1" height="20" fill="#000"/><rect x="6" y="0" width="3" height="20" fill="#000"/><rect x="11" y="0" width="1" height="20" fill="#000"/><rect x="13" y="0" width="2" height="20" fill="#000"/><rect x="17" y="0" width="3" height="20" fill="#000"/><rect x="22" y="0" width="1" height="20" fill="#000"/><rect x="26" y="0" width="1" height="20" fill="#000"/><rect x="28" y="0" width="2" height="20" fill="#000"/><rect x="33" y="0" width="3" height="20" fill="#000"/><rect x="39" y="0" width="1" height="20" fill="#000"/><rect x="41" y="0" width="2" height="20" fill="#000"/><rect x="44" y="0" width="2" height="20" fill="#000"/><rect x="50" y="0" width="1" height="20" fill="#000"/><rect x="52" y="0" width="1" height="20" fill="#000"/><rect x="55" y="0" width="2" height="20" fill="#000"/><rect x="58" y="0" width="4" height="20" fill="#000"/><rect x="63" y="0" width="2" height="20" fill="#000"/><rect x="66" y="0" width="1" height="20" fill="#000"/><rect x="68" y="0" width="2" height="20" fill="#000"/><rect x="72" y="0" width="3" height="20" fill="#000"/><rect x="77" y="0" width="1" height="20" fill="#000"/><rect x="79" y="0" width="4" height="20" fill="#000"/><rect x="84" y="0" width="3" height="20" fill="#000"/><rect x="88" y="0" width="3" height="20" fill="#000"/><rect x="92" y="0" width="1" height="20" fill="#000"/><rect x="95" y="0" width="2" height="20" fill="#000"/><rect x="99" y="0" width="2" height="20" fill="#000"/><rect x="103" y="0" width="1" height="20" fill="#000"/><rect x="105" y="0" width="3" height="20" fill="#000"/><rect x="110" y="0" width="2" height="20" fill="#000"/><rect x="115" y="0" width="3" height="20" fill="#000"/><rect x="119" y="0" width="1" height="20" fill="#000"/><rect x="121" y="0" width="2" height="20" fill="#000"/></svg>
<svg class="a" style="left:21px;top:661px" width="25" height="26" viewBox="0 0 25 26"><defs><linearGradient id="cb2" x1="0" y1="0" x2="0" y2="1"><stop offset="0" stop-color="#e49a48"/><stop offset="1" stop-color="#c0702a"/></linearGradient></defs>
<rect x="3" y="2" width="17.5" height="17" rx="1.5" fill="url(#cb2)"/><rect x="4.5" y="4" width="14.5" height="15" fill="#f2f5fa"/>
<rect x="7.5" y="0.5" width="8" height="3.5" rx="1.5" fill="#9a9a9a"/>
<path d="M8 13L11.5 17L19 7" stroke="#3a9ee0" stroke-width="2.6" fill="none" stroke-linecap="round"/>
<rect x="1" y="17.8" width="23" height="7.2" fill="#1f7fcc"/><text x="12.5" y="24.3" font-size="8" font-weight="bold" text-anchor="middle" fill="#fff" font-family="Liberation Sans" letter-spacing="-0.2">OPEN</text></svg>
<div class="a" style="left:51px;top:663px;width:1px;height:23px;background:linear-gradient(#f4f4f4,#c8c8c8 50%,#f4f4f4)"></div>
<div class="a" style="left:88px;top:663px;width:1px;height:23px;background:linear-gradient(#f4f4f4,#c8c8c8 50%,#f4f4f4)"></div>
<svg class="a" style="left:59px;top:667px" width="23" height="18" viewBox="0 0 23 18"><path d="M4 1H19L22.5 9V17.5H0.5V9Z" fill="#fafafa" stroke="#cfcfcf" stroke-width="1"/><path d="M0.5 9H7V12H16V9H22.5V17.5H0.5Z" fill="#c9c9c9"/></svg>
<svg class="a" style="left:95px;top:662px" width="24" height="24" viewBox="0 0 24 24"><rect x="1" y="1" width="22" height="22" rx="2" fill="#f6f6f6" stroke="#dedede" stroke-width=".8"/><rect x="1" y="1" width="22" height="6" rx="1" fill="#c0161e"/><rect x="8" y="3" width="8" height="1.5" fill="#f0c0c0"/>
<g fill="#bdbdbd"><rect x="3" y="9" width="1.5" height="1.2"/><rect x="6.5" y="9" width="1.5" height="1.2"/><rect x="10" y="9" width="1.5" height="1.2"/><rect x="13.5" y="9" width="1.5" height="1.2"/><rect x="17" y="9" width="1.5" height="1.2"/>
<rect x="3" y="12.5" width="1.5" height="1.2"/><rect x="6.5" y="12.5" width="1.5" height="1.2"/><rect x="10" y="12.5" width="1.5" height="1.2"/><rect x="13.5" y="12.5" width="1.5" height="1.2"/><rect x="17" y="12.5" width="1.5" height="1.2"/>
<rect x="3" y="16" width="1.5" height="1.2"/><rect x="6.5" y="16" width="1.5" height="1.2"/><rect x="10" y="16" width="1.5" height="1.2"/><rect x="13.5" y="16" width="1.5" height="1.2"/></g><rect x="20" y="9" width="1.5" height="8" fill="#f0a090"/>
<path d="M17 23L23 17V21L21 23Z" fill="#e0e0e0"/></svg>
<div class="a" style="left:2px;top:79px;width:1162px;height:5px;background:linear-gradient(rgba(0,0,0,.26),rgba(0,0,0,.08) 40%,rgba(0,0,0,0))"></div>
</body></html>
